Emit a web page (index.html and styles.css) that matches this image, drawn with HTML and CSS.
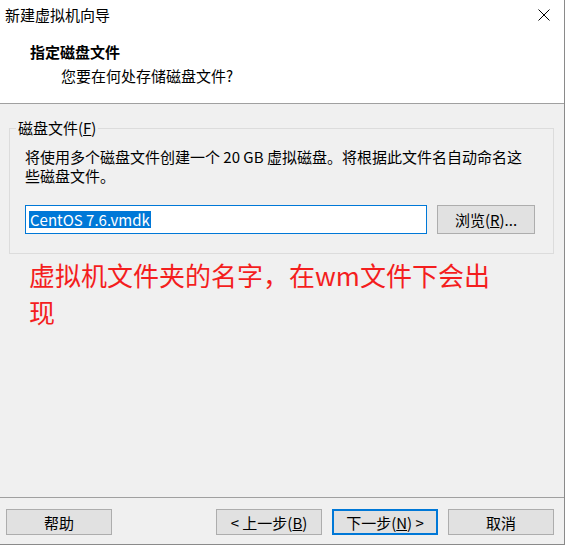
FILE: index.html
```html
<!DOCTYPE html>
<html lang="zh-CN">
<head>
  <meta charset="UTF-8">
  <title>新建虚拟机向导</title>
  <link rel="stylesheet" href="styles.css">
</head>
<body>
  <div class="window">
    <div class="titlebar">
      <span class="title">新建虚拟机向导</span>
      <span class="close">
        <svg width="12" height="12" viewBox="0 0 12 12">
          <path d="M0.5 0.5 L11.5 11.5 M11.5 0.5 L0.5 11.5" stroke="#000" stroke-width="1" fill="none"/>
        </svg>
      </span>
    </div>

    <div class="header">
      <div class="header-title">指定磁盘文件</div>
      <div class="header-sub">您要在何处存储磁盘文件?</div>
    </div>

    <div class="content">
      <fieldset class="group">
        <legend>磁盘文件(<u>F</u>)</legend>
        <p class="desc">将使用多个磁盘文件创建一个 20 GB 虚拟磁盘。将根据此文件名自动命名这些磁盘文件。</p>
        <div class="file-row">
          <div class="file-input"><span class="selected">CentOS 7.6.vmdk</span></div>
          <button class="btn browse">浏览(<u>R</u>)...</button>
        </div>
      </fieldset>

      <div class="note">虚拟机文件夹的名字，在wm文件下会出现</div>
    </div>

    <div class="footer">
      <button class="btn">帮助</button>
      <div class="nav">
        <button class="btn">&lt; 上一步(<u>B</u>)</button>
        <button class="btn primary">下一步(<u>N</u>) &gt;</button>
        <button class="btn">取消</button>
      </div>
    </div>
  </div>
</body>
</html>
```

FILE: styles.css
```css
body {
  margin: 0;
  background: #fff;
  font-family: "Noto Sans CJK SC", "Noto Sans", sans-serif;
  font-size: 15px;
  color: #000;
}

.window {
  width: 564px;
  height: 544px;
  border-right: 1px solid #8a8a8a;
  border-bottom: 1px solid #8a8a8a;
  background: #f0f0f0;
  display: flex;
  flex-direction: column;
}

.titlebar {
  height: 30px;
  background: #fff;
  display: flex;
  align-items: center;
  justify-content: space-between;
  padding: 0 14px 0 5px;
}

.title {
  line-height: 20px;
}

.close {
  display: flex;
}

.header {
  height: 74px;
  background: #fff;
  border-bottom: 1px solid #a0a0a0;
  padding-left: 30px;
  box-sizing: border-box;
}

.header-title {
  font-weight: bold;
  line-height: 20px;
  margin-top: 12px;
}

.header-sub {
  padding-left: 31px;
  line-height: 20px;
  margin-top: 4px;
}

.content {
  flex: 1;
  padding: 14px 11px 0 9px;
}

.group {
  margin: 0;
  border: 1px solid #dcdcdc;
  padding: 9px 18px 19px 15px;
}

.group legend {
  padding: 0 2px;
  margin-left: -9px;
  line-height: 20px;
}

.desc {
  margin: 0;
  line-height: 19px;
}

.file-row {
  display: flex;
  align-items: center;
  gap: 10px;
  margin-top: 20px;
}

.file-input {
  width: 402px;
  height: 29px;
  box-sizing: border-box;
  border: 1px solid #0078d7;
  background: #fff;
  display: flex;
  align-items: center;
  padding-left: 3px;
}

.selected {
  background: #0078d7;
  color: #fff;
  line-height: 17px;
  padding: 0 1px;
}

.btn {
  font-family: inherit;
  font-size: 15px;
  color: #000;
  background: #e1e1e1;
  border: 1px solid #adadad;
  width: 106px;
  height: 26px;
  padding: 0;
  box-sizing: border-box;
}

.btn.browse {
  width: 98px;
  height: 29px;
}

.btn.primary {
  border: 2px solid #0078d7;
}

.note {
  color: #f41e1e;
  font-size: 26px;
  line-height: 37px;
  width: 470px;
  margin: 2px 0 0 20px;
}

.footer {
  height: 47px;
  box-sizing: border-box;
  border-top: 1px solid #a0a0a0;
  display: flex;
  justify-content: space-between;
  padding: 11px 10px 0 6px;
}

.nav {
  display: flex;
  gap: 10px;
}
```
